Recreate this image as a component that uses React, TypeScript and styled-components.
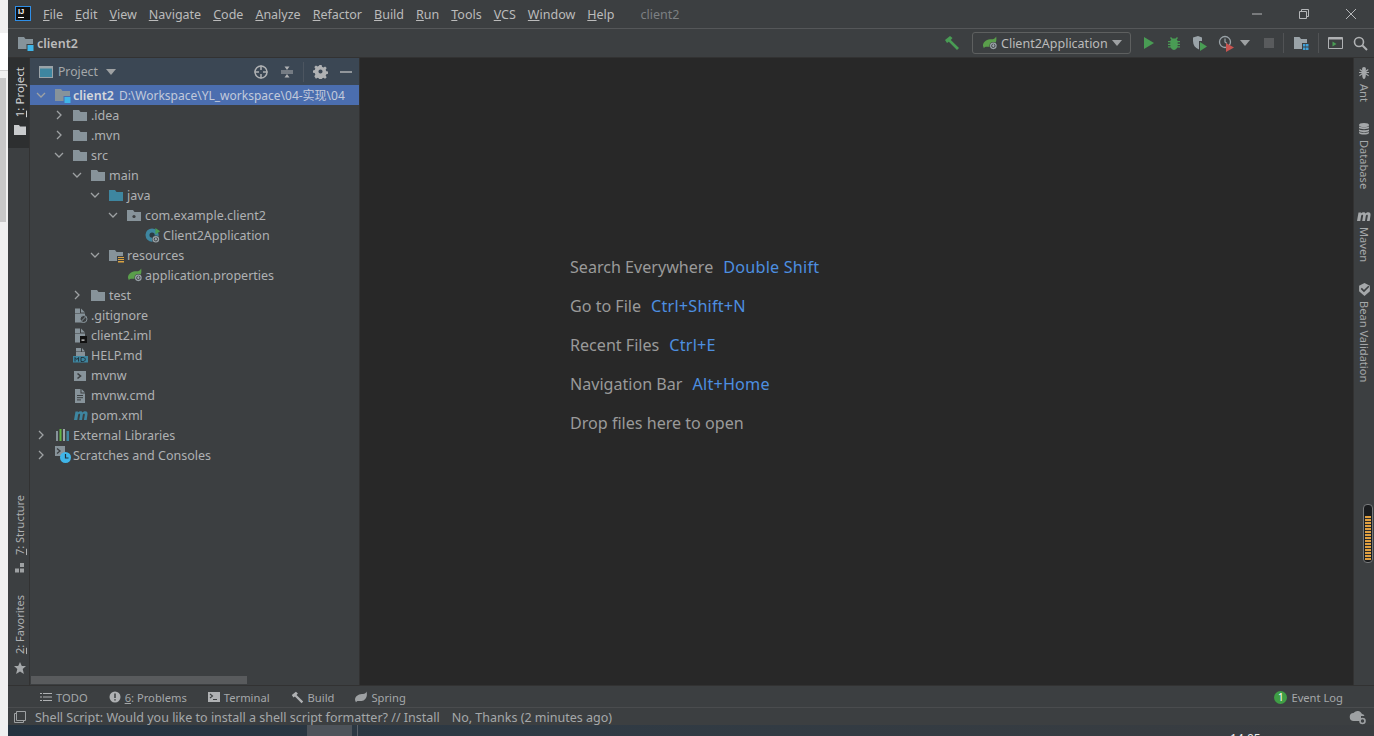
import React from 'react';
import styled, { createGlobalStyle } from 'styled-components';

const GlobalStyle = createGlobalStyle`
  html, body {
    margin: 0;
    padding: 0;
    height: 100%;
    overflow: hidden;
    background: #f0f0f0;
  }
  #root {
    height: 100%;
  }
`;

const menuItems = ['File', 'Edit', 'View', 'Navigate', 'Code', 'Analyze', 'Refactor', 'Build', 'Run', 'Tools', 'VCS', 'Window', 'Help'];

const GRAY = '#87939a';
const BLUE = '#3e86a0';
const GREEN = '#499c54';

type IconProps = { color?: string };

const FolderIcon = ({ color = GRAY }: IconProps) => (
  <svg width="16" height="16" viewBox="0 0 16 16">
    <path d="M0 3h6l1.500 2H14v9H0z" fill={color} />
  </svg>
);

const ModuleIcon = () => (
  <svg width="16" height="16" viewBox="0 0 16 16">
    <path d="M0 2h6l1.500 2H15v5H8.500v5H0z" fill={GRAY} />
    <rect x="9.500" y="10" width="6" height="6" fill="#3fb5e8" />
  </svg>
);

const PackageIcon = () => (
  <svg width="16" height="16" viewBox="0 0 16 16">
    <path d="M0 3h6l1.500 2H14v9H0z" fill={GRAY} />
    <circle cx="7" cy="9.500" r="1.600" fill="#3c3f41" />
  </svg>
);

const ResourcesIcon = () => (
  <svg width="16" height="16" viewBox="0 0 16 16">
    <path d="M0 3h6l1.500 2H14v4H8v5H0z" fill={GRAY} />
    <path d="M9 10h6v1H9zM9 12h6v1H9zM9 14h6v1H9zM9 16h6v-.5H9z" fill="#d9a343" />
  </svg>
);

const BootBadge = ({ x, y }: { x: number; y: number }) => (
  <g transform={`translate(${x} ${y})`}>
    <circle cx="4" cy="4" r="4" fill="#3c3f41" />
    <circle cx="4" cy="4" r="3.500" fill="#9aa3a8" />
    <circle cx="4" cy="4" r="1.800" fill="none" stroke="#3c3f41" strokeWidth="1" />
    <path d="M4 1.800v2" stroke="#9aa3a8" strokeWidth="1" />
  </g>
);

const SpringLeaf = () => (
  <svg width="17" height="16" viewBox="0 0 18 16">
    <path d="M1 11C1 6 6 4 10 4c2 0 4-1 5-3 1 5-1 10-5 11H4c-1 0-1.500 1-2 1.500z" fill="#5a9e4b" />
    <BootBadge x={8} y={7} />
  </svg>
);

const BootClassIcon = () => (
  <svg width="17" height="17" viewBox="0 0 18 18">
    <circle cx="7.500" cy="8.500" r="7" fill={BLUE} />
    <circle cx="7.500" cy="8.500" r="2.800" fill="#2b3b44" />
    <path d="M11 1l5 3.500L11 8z" fill={GREEN} />
    <BootBadge x={7.500} y={9} />
  </svg>
);

const FileShape = ({ children }: { children?: React.ReactNode }) => (
  <svg width="16" height="16" viewBox="0 0 16 16">
    <path d="M2 1.500h5V6H2zM8 1.500l4 4H8zM2 6.500h10V15.500H2z" fill={GRAY} />
    {children}
  </svg>
);

const GitIgnoreIcon = () => (
  <FileShape>
    <circle cx="10.500" cy="12" r="3.500" fill="#3c3f41" stroke={GRAY} strokeWidth="1" />
    <path d="M8 14.500l5-5" stroke={GRAY} strokeWidth="1" />
  </FileShape>
);

const ImlIcon = () => (
  <FileShape>
    <rect x="7" y="9" width="7" height="7" fill="#111" />
    <rect x="8.500" y="12.500" width="3" height="1.200" fill="#ddd" />
  </FileShape>
);

const MarkdownIcon = () => (
  <svg width="16" height="16" viewBox="0 0 16 16">
    <path d="M3 1h5v3.500H3v3.500zM9 1l3 3.500H9zM3 5h9v4H3z" fill={GRAY} />
    <rect x="0" y="9" width="15" height="6.500" fill={BLUE} />
    <path d="M2 14.500v-4l1.800 2 1.800-2v4M8 10.500v4h1.800c1.500 0 2.500-.8 2.500-2s-1-2-2.500-2z" fill="none" stroke="#20323c" strokeWidth="1" />
  </svg>
);

const ShellIcon = () => (
  <svg width="16" height="16" viewBox="0 0 16 16">
    <rect x="1" y="4" width="12" height="10" fill={GRAY} />
    <path d="M4.500 6.500L7.500 9l-3 2.500" fill="none" stroke="#3c3f41" strokeWidth="1.600" />
  </svg>
);

const TextFileIcon = () => (
  <svg width="16" height="16" viewBox="0 0 16 16">
    <path d="M2 2h5.500v4.500H12V16H2zM8.500 2L12 5.500H8.500z" fill={GRAY} />
    <path d="M4 8.500h6M4 10.700h6M4 12.900h4" stroke="#3c3f41" strokeWidth="1" />
  </svg>
);

const MavenIcon = ({ color = BLUE }: IconProps) => (
  <svg width="16" height="12" viewBox="0 0 16 12">
    <path
      d="M1 11L2.500 2.500H5l-.2 1c.8-.9 1.700-1.300 2.700-1.300s1.700.5 2 1.400c.8-.9 1.800-1.400 2.800-1.400 1.700 0 2.500 1.200 2.200 3L13.700 11h-2.800l.9-5c.1-.8-.1-1.200-.7-1.200s-1.100.4-1.300 1.300L9 11H6.200l.9-5c.1-.8-.1-1.200-.7-1.200s-1.100.4-1.300 1.300L4.300 11z"
      fill={color}
    />
  </svg>
);

const LibrariesIcon = () => (
  <svg width="16" height="16" viewBox="0 0 16 16">
    <rect x="1" y="4" width="2" height="10" fill={GRAY} />
    <rect x="4.500" y="2" width="2" height="12" fill="#62b543" />
    <rect x="8" y="2" width="2" height="12" fill="#9aa3a8" />
    <rect x="11.500" y="4" width="2.500" height="10" fill={BLUE} />
  </svg>
);

const ScratchesIcon = () => (
  <svg width="16" height="18" viewBox="0 0 16 18">
    <rect x="0" y="0" width="10" height="10" fill={GRAY} />
    <path d="M2 2.500L5 5 2 7.500" fill="none" stroke="#3c3f41" strokeWidth="1.300" />
    <circle cx="10.500" cy="11.500" r="5.500" fill="#3fb5e8" />
    <path d="M10.500 8v4h3" fill="none" stroke="#22303a" strokeWidth="1.200" />
  </svg>
);

const HammerIcon = ({ color = GREEN, size = 16 }: { color?: string; size?: number }) => (
  <svg width={size} height={size} viewBox="0 0 16 16">
    <path d="M1 5l5-4 2.500 2L6.800 5 15 13l-2 2-8.200-8.200L3 8z" fill={color} />
  </svg>
);

const ChevronDown = () => (
  <svg width="10" height="10" viewBox="0 0 10 10">
    <path d="M1 3l4 4 4-4" fill="none" stroke="#9ea1a3" strokeWidth="1.300" />
  </svg>
);

const ChevronRight = () => (
  <svg width="10" height="10" viewBox="0 0 10 10">
    <path d="M3 1l4 4-4 4" fill="none" stroke="#9ea1a3" strokeWidth="1.300" />
  </svg>
);

const Caret = () => (
  <svg width="10" height="6" viewBox="0 0 10 6">
    <path d="M0 0h10L5 6z" fill="#9ea1a3" />
  </svg>
);

type TreeRow = {
  level: number;
  label: string;
  open?: boolean;
  icon: React.ReactNode;
};

const treeRows: TreeRow[] = [
  { level: 1, label: '.idea', open: false, icon: <FolderIcon /> },
  { level: 1, label: '.mvn', open: false, icon: <FolderIcon /> },
  { level: 1, label: 'src', open: true, icon: <FolderIcon /> },
  { level: 2, label: 'main', open: true, icon: <FolderIcon /> },
  { level: 3, label: 'java', open: true, icon: <FolderIcon color={BLUE} /> },
  { level: 4, label: 'com.example.client2', open: true, icon: <PackageIcon /> },
  { level: 5, label: 'Client2Application', icon: <BootClassIcon /> },
  { level: 3, label: 'resources', open: true, icon: <ResourcesIcon /> },
  { level: 4, label: 'application.properties', icon: <SpringLeaf /> },
  { level: 2, label: 'test', open: false, icon: <FolderIcon /> },
  { level: 1, label: '.gitignore', icon: <GitIgnoreIcon /> },
  { level: 1, label: 'client2.iml', icon: <ImlIcon /> },
  { level: 1, label: 'HELP.md', icon: <MarkdownIcon /> },
  { level: 1, label: 'mvnw', icon: <ShellIcon /> },
  { level: 1, label: 'mvnw.cmd', icon: <TextFileIcon /> },
  { level: 1, label: 'pom.xml', icon: <MavenIcon /> },
  { level: 0, label: 'External Libraries', open: false, icon: <LibrariesIcon /> },
  { level: 0, label: 'Scratches and Consoles', open: false, icon: <ScratchesIcon /> },
];

const hints = [
  { text: 'Search Everywhere', key: 'Double Shift' },
  { text: 'Go to File', key: 'Ctrl+Shift+N' },
  { text: 'Recent Files', key: 'Ctrl+E' },
  { text: 'Navigation Bar', key: 'Alt+Home' },
  { text: 'Drop files here to open' },
];

const App = () => {
  return (
    <Screen>
      <GlobalStyle />
      <OtherWindow>
        <WhiteArea />
        <OtherScrollHead />
        <OtherScrollThumb />
      </OtherWindow>
      <Ide>
        <TitleBar>
          <AppLogo>IJ<LogoLine /></AppLogo>
          <Menu>
            {menuItems.map((item) => (
              <MenuItem key={item}>
                <u>{item[0]}</u>
                {item.slice(1)}
              </MenuItem>
            ))}
          </Menu>
          <WindowTitle>client2</WindowTitle>
          <WindowButtons>
            <svg width="12" height="12" viewBox="0 0 12 12">
              <path d="M1 6h10" stroke="#b5b7b9" />
            </svg>
            <svg width="12" height="12" viewBox="0 0 12 12">
              <path d="M1.500 3.500h7v7h-7zM3.500 3.500v-2h7v7h-2" fill="none" stroke="#b5b7b9" />
            </svg>
            <svg width="12" height="12" viewBox="0 0 12 12">
              <path d="M1 1l10 10M11 1L1 11" stroke="#b5b7b9" />
            </svg>
          </WindowButtons>
        </TitleBar>

        <NavBar>
          <Crumb>
            <ModuleIcon />
            <b>client2</b>
          </Crumb>
          <RunTools>
            <HammerIcon />
            <RunConfig>
              <SpringLeaf />
              <span>Client2Application</span>
              <Caret />
            </RunConfig>
            <ToolIcons>
              <svg width="14" height="14" viewBox="0 0 14 14">
                <path d="M2 1l10 6-10 6z" fill={GREEN} />
              </svg>
              <svg width="16" height="16" viewBox="0 0 16 16">
                <path d="M5 2l1.500 1.500h3L11 2l1 1-1.300 1.500c.5.500.8 1 .9 1.500H14v1.300h-2.300v1.400H14V10h-2.400v1.300H14v1.200h-2.700C10.500 14 9.300 15 8 15s-2.500-1-3.300-2.500H2v-1.200h2.400V10H2V8.700h2.300V7.300H2V6h2.400c.1-.5.400-1 .9-1.500L4 3z" fill={GREEN} />
              </svg>
              <svg width="16" height="16" viewBox="0 0 16 16">
                <path d="M1 2.500L6 1l4 1.500V6H7v8.500C3 13 1 10 1 6z" fill="#9aa3a8" />
                <path d="M8 7l7 4.500L8 16z" fill={GREEN} />
              </svg>
              <ProfilerGroup>
                <svg width="17" height="17" viewBox="0 0 17 17">
                  <circle cx="7" cy="7" r="5.500" fill="none" stroke="#9aa3a8" strokeWidth="1.300" />
                  <path d="M7 3.500V7l2 1.500" fill="none" stroke="#9aa3a8" strokeWidth="1.200" />
                  <path d="M8 8l8 4.500L8 17z" fill="#c75450" />
                </svg>
                <Caret />
              </ProfilerGroup>
              <StopIcon />
              <ToolDivider />
              <svg width="16" height="16" viewBox="0 0 16 16">
                <path d="M1 2h5.500L8 4h6v4H9v6H1z" fill="#9aa3a8" />
                <path d="M10 9h2.500v2.500H10zM13 9h2.500v2.500H13zM10 12.500h2.500V15H10zM13 12.500h2.500V15H13z" fill="#3fa0d8" />
              </svg>
              <ToolDivider />
              <svg width="15" height="14" viewBox="0 0 15 14">
                <path d="M.500 1.500h14v11H.500z" fill="none" stroke="#afb1b3" />
                <path d="M.500 1.500h14v2H.500z" fill="#afb1b3" />
                <path d="M4.500 5.500l4 2.500-4 2.500z" fill={GREEN} />
              </svg>
              <svg width="15" height="15" viewBox="0 0 15 15">
                <circle cx="6" cy="6" r="4.500" fill="none" stroke="#afb1b3" strokeWidth="1.600" />
                <path d="M9.500 9.500l4.500 4.500" stroke="#afb1b3" strokeWidth="2" />
              </svg>
            </ToolIcons>
          </RunTools>
        </NavBar>

        <Body>
          <LeftStripe>
            <StripeGroup>
              <LeftButton $active>
                <svg width="14" height="12" viewBox="0 0 14 12">
                  <path d="M1 1h5l1 1.500h6V11H1z" fill="#c9cbcd" />
                </svg>
                <LeftLabel $active><u>1</u>: Project</LeftLabel>
              </LeftButton>
            </StripeGroup>
            <StripeGroup>
              <LeftButton>
                <svg width="12" height="12" viewBox="0 0 12 12">
                  <path d="M6 1h4v4H6zM1 6.500h4v4H1zM6 6.500h4v4H6z" fill="#9ea1a3" />
                </svg>
                <LeftLabel><u>7</u>: Structure</LeftLabel>
              </LeftButton>
              <LeftButton>
                <svg width="14" height="14" viewBox="0 0 14 14">
                  <path d="M7 1l1.800 4H13L9.700 8l1.200 5L7 10.400 3.100 13l1.200-5L1 5h4.200z" fill="#a5a8aa" />
                </svg>
                <LeftLabel><u>2</u>: Favorites</LeftLabel>
              </LeftButton>
            </StripeGroup>
          </LeftStripe>

          <ProjectPanel>
            <PanelHeader>
              <svg width="14" height="12" viewBox="0 0 14 12">
                <rect x=".5" y=".5" width="13" height="11" fill="#3e86a0" stroke="#9aa3a8" />
                <rect x="1" y="1" width="12" height="1.500" fill="#9aa3a8" />
              </svg>
              <PanelTitle>Project</PanelTitle>
              <Caret />
              <PanelActions>
                <svg width="16" height="16" viewBox="0 0 16 16">
                  <circle cx="8" cy="8" r="6" fill="none" stroke="#afb1b3" strokeWidth="1.500" />
                  <path d="M8 1.500V6M8 10v4.500M1.500 8H6M10 8h4.500" stroke="#afb1b3" strokeWidth="1.500" />
                </svg>
                <svg width="14" height="14" viewBox="0 0 14 14">
                  <path d="M1 6h12M1 8h12" stroke="#afb1b3" />
                  <path d="M7 5L4.500 1.500h5zM7 9l-2.500 3.500h5z" fill="#afb1b3" />
                </svg>
                <HeaderDivider />
                <svg width="15" height="15" viewBox="-1 -1 16 16">
                  <path
                    fillRule="evenodd"
                    d="M5.800 0h2.400l.4 2 1.500.7 1.800-1.100 1.700 1.700-1.100 1.800.7 1.500 2 .4v2.400l-2 .4-.7 1.500 1.100 1.800-1.700 1.700-1.800-1.100-1.500.7-.4 2H5.800l-.4-2-1.500-.7-1.800 1.100L.4 12l1.100-1.800-.7-1.500-2-.4V5.900l2-.4.7-1.500L.4 2.200 2.100.5l1.800 1.100 1.500-.7zM7 4.800a2.200 2.200 0 100 4.400 2.200 2.200 0 000-4.400z"
                    fill="#afb1b3"
                  />
                </svg>
                <svg width="14" height="14" viewBox="0 0 14 14">
                  <path d="M1 7h12" stroke="#afb1b3" strokeWidth="1.500" />
                </svg>
              </PanelActions>
            </PanelHeader>
            <Tree>
              <RootRow>
                <Arrow>
                  <ChevronDown />
                </Arrow>
                <IconSlot>
                  <ModuleIcon />
                </IconSlot>
                <b>client2</b>
                <RootPath>D:\Workspace\YL_workspace\04-实现\04</RootPath>
              </RootRow>
              {treeRows.map((row) => (
                <Row key={row.label} $level={row.level}>
                  <Arrow>
                    {row.open === true && <ChevronDown />}
                    {row.open === false && <ChevronRight />}
                  </Arrow>
                  <IconSlot>{row.icon}</IconSlot>
                  {row.label}
                </Row>
              ))}
            </Tree>
            <TreeScroll />
          </ProjectPanel>

          <Editor>
            {hints.map((hint) => (
              <Hint key={hint.text}>
                {hint.text}
                {hint.key && <HintKey>{hint.key}</HintKey>}
              </Hint>
            ))}
          </Editor>

          <RightStripe>
            <RightButton>
              <svg width="12" height="12" viewBox="0 0 12 12">
                <path d="M6 0a2 2 0 012 2 2.500 2.500 0 01-.5 1.500L10 2l.5 1L8 5h3v1H8l3 2.500-.7.8L7.800 7.500C8 10 7 12 6 12s-2-2-1.800-4.500L1.700 9.300 1 8.500 4 6H1V5h3L1.500 3l.5-1 2.500 1.500A2.500 2.500 0 014 2a2 2 0 012-2z" fill="#a5a8aa" />
              </svg>
              <RightLabel>Ant</RightLabel>
            </RightButton>
            <RightButton>
              <svg width="12" height="12" viewBox="0 0 12 12">
                <ellipse cx="6" cy="2" rx="5" ry="2" fill="#a5a8aa" />
                <path d="M1 3.500c1 1 9 1 10 0V5c-1 1.500-9 1.500-10 0zM1 6.500c1 1 9 1 10 0V8c-1 1.500-9 1.500-10 0zM1 9c1 1 9 1 10 0v1c-1 2-9 2-10 0z" fill="#a5a8aa" />
              </svg>
              <RightLabel>Database</RightLabel>
            </RightButton>
            <RightButton>
              <MavenIcon color="#a5a8aa" />
              <RightLabel>Maven</RightLabel>
            </RightButton>
            <RightButton>
              <svg width="13" height="13" viewBox="0 0 12 12">
                <path d="M6 0l5 2.500v5L6 12 1 7.500v-5z" fill="#a5a8aa" />
                <path d="M3 5l2.500 2.500L10 3" fill="none" stroke="#3c3f41" strokeWidth="1.500" />
              </svg>
              <RightLabel>Bean Validation</RightLabel>
            </RightButton>
            <InputWidget />
          </RightStripe>
        </Body>

        <ToolWindowBar>
          <ToolButton>
            <svg width="12" height="12" viewBox="0 0 12 12">
              <path d="M0 2h2v1H0zM3 2h9v1H3zM0 5.500h2v1H0zM3 5.500h9v1H3zM0 9h2v1H0zM3 9h9v1H3z" fill="#afb1b3" />
            </svg>
            TODO
          </ToolButton>
          <ToolButton>
            <svg width="12" height="12" viewBox="0 0 12 12">
              <circle cx="6" cy="6" r="5.500" fill="#afb1b3" />
              <path d="M6 2.500v4.500M6 8.300v1.300" stroke="#3c3f41" strokeWidth="1.500" />
            </svg>
            <span><u>6</u>: Problems</span>
          </ToolButton>
          <ToolButton>
            <svg width="12" height="12" viewBox="0 0 12 12">
              <rect x="0" y="1" width="12" height="10" fill="#afb1b3" />
              <path d="M2 3l2.500 2L2 7M5 8.500h4" fill="none" stroke="#3c3f41" strokeWidth="1.100" />
            </svg>
            Terminal
          </ToolButton>
          <ToolButton>
            <HammerIcon color="#afb1b3" size={13} />
            Build
          </ToolButton>
          <ToolButton>
            <svg width="12" height="12" viewBox="0 0 12 12">
              <path d="M0 9C0 4 5 3 8 3c2 0 3-1 3.500-2.500C13 6 10 10 6.500 10H3c-1 0-1.500.5-2 1.500z" fill="#9ea1a3" />
            </svg>
            Spring
          </ToolButton>
          <EventLog>
            <EventBadge>1</EventBadge>
            Event Log
          </EventLog>
        </ToolWindowBar>

        <StatusBar>
          <svg width="14" height="14" viewBox="0 0 14 14">
            <path d="M3.500 1.500h9v9h-9zM3.500 3.500h-2v9h9v-2" fill="none" stroke="#9ea1a3" />
          </svg>
          <StatusText>
            Shell Script: Would you like to install a shell script formatter? // Install
            <NoThanks>No, Thanks (2 minutes ago)</NoThanks>
          </StatusText>
          <svg width="18" height="16" viewBox="0 0 18 16">
            <path d="M5 12a4 4 0 01-.5-8A5 5 0 0113 5a3 3 0 012.500 2H12v5z" fill="#9ea1a3" />
            <circle cx="13.500" cy="12" r="2.500" fill="none" stroke="#9ea1a3" strokeWidth="1.600" />
          </svg>
        </StatusBar>

        <DesktopStrip>
          <TaskButton />
          <TaskLine />
          <Clock>14:05</Clock>
        </DesktopStrip>
      </Ide>
    </Screen>
  );
};

export default App;

const Screen = styled.div`
  display: flex;
  width: 1374px;
  height: 736px;
  overflow: hidden;
  font-family: 'Noto Sans', 'Noto Sans CJK SC', sans-serif;
  font-size: 12.5px;
  color: #afb1b3;
`;

const OtherWindow = styled.div`
  flex: none;
  width: 8px;
  background: #f0f0f0;
  padding-top: 13px;
`;

const WhiteArea = styled.div`
  height: 37px;
  margin-top: 20px;
  background: #fff;
  border-bottom: 1px solid #d0d0d0;
`;

const OtherScrollHead = styled.div`
  height: 7px;
`;

const OtherScrollThumb = styled.div`
  width: 6px;
  height: 144px;
  background: #c8c8c8;
`;

const Ide = styled.div`
  flex: 1;
  min-width: 0;
  display: flex;
  flex-direction: column;
  background: #3c3f41;
`;

const TitleBar = styled.div`
  flex: none;
  height: 28px;
  display: flex;
  align-items: center;
  padding-left: 7px;
  border-bottom: 1px solid #555759;
`;

const AppLogo = styled.div`
  position: relative;
  width: 12px;
  height: 13px;
  margin-top: -1px;
  padding-left: 2px;
  background: #111;
  border: 1px solid #2f8fe8;
  color: #fff;
  font-family: 'Liberation Sans', sans-serif;
  font-size: 7.5px;
  font-weight: 700;
  line-height: 10px;
`;

const LogoLine = styled.span`
  position: absolute;
  left: 2px;
  bottom: 2px;
  width: 6px;
  height: 1px;
  background: #fff;
`;

const Menu = styled.div`
  display: flex;
  gap: 12px;
  margin-left: 12px;
`;

const MenuItem = styled.span`
  color: #bbb;
  font-size: 12.5px;
`;

const WindowTitle = styled.span`
  margin-left: 26px;
  color: #7d8083;
`;

const WindowButtons = styled.div`
  margin-left: auto;
  display: flex;
  gap: 35px;
  padding-right: 17px;
`;

const NavBar = styled.div`
  flex: none;
  height: 28px;
  display: flex;
  align-items: center;
  justify-content: space-between;
  padding: 0 6px 0 10px;
  border-bottom: 1px solid #323232;
`;

const Crumb = styled.div`
  display: flex;
  align-items: center;
  gap: 3px;
  color: #bbb;
  b {
    font-weight: 600;
  }
`;

const RunTools = styled.div`
  display: flex;
  align-items: center;
  gap: 12px;
`;

const RunConfig = styled.div`
  width: 159px;
  box-sizing: border-box;
  height: 22px;
  display: flex;
  align-items: center;
  gap: 2px;
  padding: 0 8px 0 9px;
  border: 1px solid #5e6060;
  border-radius: 3px;
  color: #bbb;
  span {
    flex: 1;
  }
`;

const ToolIcons = styled.div`
  display: flex;
  align-items: center;
  gap: 10px;
  margin-left: -1px;
`;

const ProfilerGroup = styled.div`
  display: flex;
  align-items: center;
  gap: 5px;
  margin-right: 4px;
`;

const StopIcon = styled.div`
  width: 10px;
  height: 10px;
  background: #595b5d;
`;

const ToolDivider = styled.div`
  width: 1px;
  height: 20px;
  margin: 0 -1px;
  background: #515355;
`;

const Body = styled.div`
  flex: 1;
  min-height: 0;
  display: flex;
`;

const LeftStripe = styled.div`
  flex: none;
  width: 21px;
  display: flex;
  flex-direction: column;
  justify-content: space-between;
  border-right: 1px solid #323232;
`;

const StripeGroup = styled.div`
  display: flex;
  flex-direction: column;
`;

const LeftButton = styled.div<{ $active?: boolean }>`
  display: flex;
  flex-direction: column-reverse;
  align-items: center;
  gap: 7px;
  padding: ${(p) => (p.$active ? '9px 0 12px 2px' : '11px 0 10px 2px')};
  background: ${(p) => (p.$active ? '#2d2f30' : 'transparent')};
`;

const LeftLabel = styled.span<{ $active?: boolean }>`
  writing-mode: vertical-rl;
  transform: rotate(180deg);
  font-size: ${(p) => (p.$active ? '11.5px' : '11px')};
  line-height: 14px;
  color: ${(p) => (p.$active ? '#d0d2d4' : '#afb1b3')};
`;

const ProjectPanel = styled.div`
  flex: none;
  width: 329px;
  display: flex;
  flex-direction: column;
  border-right: 1px solid #323232;
`;

const PanelHeader = styled.div`
  flex: none;
  height: 27px;
  display: flex;
  align-items: center;
  padding-left: 9px;
  background: #3b4754;
`;

const PanelTitle = styled.span`
  margin: 0 8px 0 5px;
  color: #a5a8aa;
  font-size: 12.2px;
`;

const PanelActions = styled.div`
  margin-left: auto;
  display: flex;
  align-items: center;
  gap: 11px;
  padding-right: 6px;
`;

const HeaderDivider = styled.div`
  width: 1px;
  height: 20px;
  background: #4c5560;
  margin: 0 -2px;
`;

const Tree = styled.div`
  flex: 1;
  min-height: 0;
  display: flex;
  flex-direction: column;
`;

const Row = styled.div<{ $level: number }>`
  flex: none;
  height: 20px;
  display: flex;
  align-items: center;
  padding-left: ${(p) => p.$level * 18}px;
  white-space: nowrap;
  overflow: hidden;
`;

const RootRow = styled.div`
  flex: none;
  height: 20px;
  display: flex;
  align-items: center;
  background: #4b6eaf;
  white-space: nowrap;
  overflow: hidden;
  color: #d5d8dc;
  b {
    font-weight: 600;
  }
`;

const RootPath = styled.span`
  margin-left: 5px;
  color: #c2cadb;
  font-size: 12px;
`;

const Arrow = styled.span`
  flex: none;
  width: 25px;
  padding-left: 6px;
  box-sizing: border-box;
  display: flex;
  align-items: center;
`;

const IconSlot = styled.span`
  flex: none;
  width: 18px;
  height: 20px;
  display: flex;
  align-items: center;
`;

const TreeScroll = styled.div`
  flex: none;
  width: 216px;
  height: 8px;
  margin: 0 0 1px 1px;
  background: #595b5d;
`;

const Editor = styled.div`
  flex: 1;
  min-width: 0;
  display: flex;
  flex-direction: column;
  gap: 17px;
  padding: 198px 0 0 210px;
  background: #282828;
  border-right: 1px solid #323232;
`;

const Hint = styled.div`
  height: 22px;
  line-height: 22px;
  font-size: 16.1px;
  color: #9a9a9a;
`;

const HintKey = styled.span`
  margin-left: 10px;
  font-size: 16.2px;
  letter-spacing: 0.2px;
  color: #4d8fe0;
`;

const RightStripe = styled.div`
  position: relative;
  flex: none;
  width: 20px;
  display: flex;
  flex-direction: column;
  align-items: center;
  gap: 21px;
  padding-top: 9px;
`;

const RightButton = styled.div`
  display: flex;
  flex-direction: column;
  align-items: center;
  gap: 5px;
`;

const RightLabel = styled.span`
  writing-mode: vertical-rl;
  font-size: 11.1px;
  line-height: 14px;
  color: #a5a8aa;
`;

const InputWidget = styled.div`
  position: absolute;
  top: 446px;
  left: 9px;
  width: 8px;
  height: 57px;
  border: 1px solid #77797b;
  border-radius: 4px;
  background:
    repeating-linear-gradient(to bottom, #e0a040 0 2px, #2a2c2e 2px 3px) 1px 11px / 6px 44px no-repeat,
    #1a1c1e;
`;

const ToolWindowBar = styled.div`
  flex: none;
  height: 23px;
  display: flex;
  align-items: center;
  gap: 21px;
  padding: 1px 31px 0 32px;
  border-top: 1px solid #323232;
  border-bottom: 1px solid #4a4c4e;
  box-sizing: border-box;
`;

const ToolButton = styled.div`
  display: flex;
  align-items: center;
  gap: 4px;
  font-size: 11.2px;
  color: #a5a8aa;
`;

const EventLog = styled(ToolButton)`
  margin-left: auto;
`;

const EventBadge = styled.span`
  width: 13px;
  height: 13px;
  border-radius: 50%;
  background: #3f9e45;
  color: #fff;
  font-size: 10px;
  line-height: 13px;
  text-align: center;
`;

const StatusBar = styled.div`
  flex: none;
  height: 17px;
  display: flex;
  align-items: center;
  padding: 1px 7px 0 5px;
  box-sizing: border-box;
`;

const StatusText = styled.span`
  flex: 1;
  margin-left: 8px;
  font-size: 12.5px;
  color: #a5a8aa;
`;

const NoThanks = styled.span`
  margin-left: 12px;
`;

const DesktopStrip = styled.div`
  flex: none;
  height: 11px;
  display: flex;
  overflow: hidden;
  background: linear-gradient(to right, #24323f, #2f3a44 40%, #3a3d40);
`;

const TaskButton = styled.div`
  width: 45px;
  height: 11px;
  margin-left: 299px;
  background: #4d535a;
`;

const TaskLine = styled.div`
  width: 1px;
  height: 11px;
  margin-left: 5px;
  background: #5a6068;
`;

const Clock = styled.span`
  margin-left: 872px;
  padding-top: 7px;
  font-size: 12px;
  line-height: 14px;
  color: #eee;
`;
